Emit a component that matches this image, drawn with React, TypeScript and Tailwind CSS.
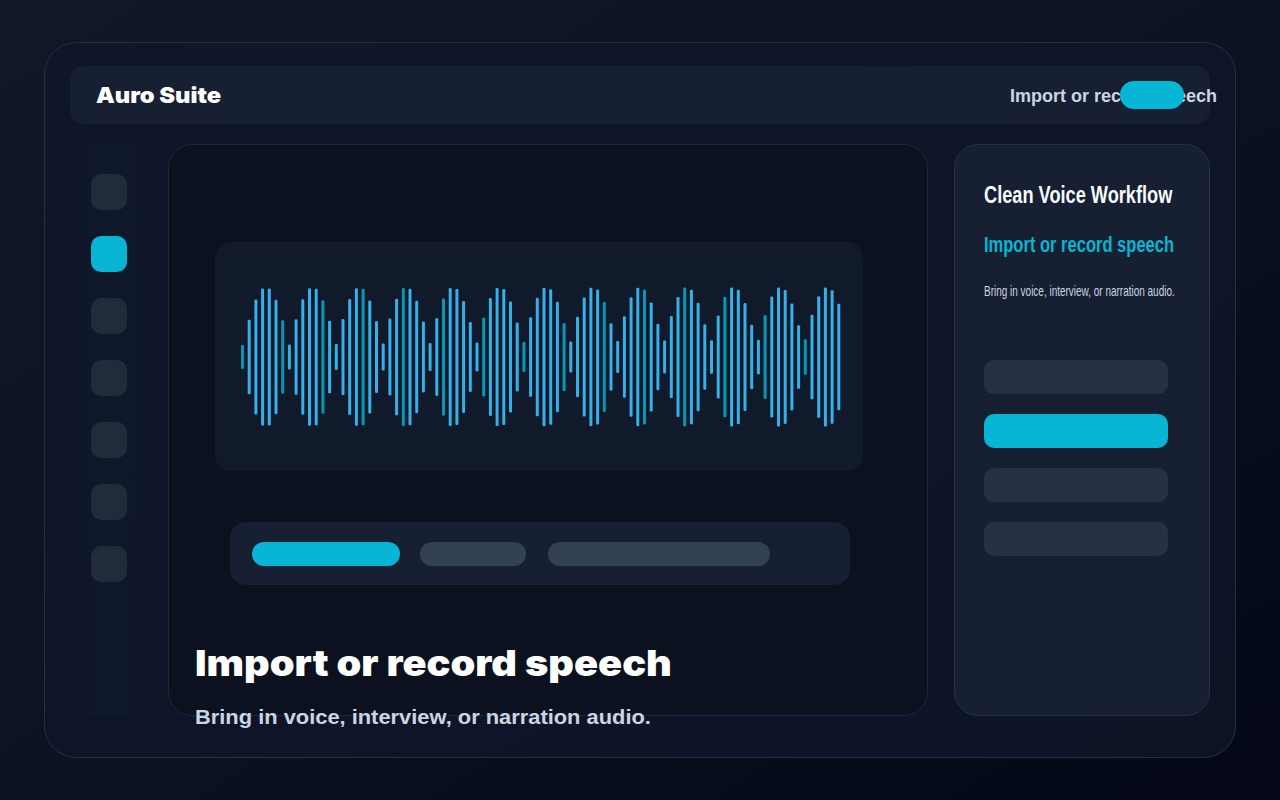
import React from 'react';

const sans = "font-['Liberation_Sans',Arial,sans-serif]";

// sine envelope for the waveform bars
const bars = Array.from({ length: 90 }, (_, i) => ({
  h: 24 + 116 * Math.abs(Math.sin(i * 0.45)),
  accent: i % 6 === 0,
}));

const Waveform = () => (
  <svg width="600" height="140" viewBox="0 0 600 140">
    {bars.map((b, i) => (
      <rect
        key={i}
        x={i * 6.7}
        y={70 - b.h / 2}
        width="3"
        height={b.h}
        rx="1.2"
        fill={b.accent ? '#06b6d4' : '#38bdf8'}
        fillOpacity={b.accent ? 0.8 : 0.92}
      />
    ))}
  </svg>
);

const navItems = [false, true, false, false, false, false, false];
const steps = [false, true, false, false];

export default function App() {
  return (
    <div className={`min-h-screen w-full bg-linear-to-br from-[#101827] via-[#0b1221] to-[#040816] px-[44px] pt-[42px] ${sans}`}>
      <div className="h-[716px] w-[1192px] rounded-[32px] border border-[#262f3f] bg-[#10172a]/80 px-[25px] pt-[23px]">
        {/* top bar */}
        <header className="flex h-[58px] items-center justify-between rounded-[14px] bg-[#172033] pl-[26px] pr-[26px]">
          <span className="origin-left scale-x-[1.077] font-['Inter',sans-serif] text-[22px] font-black text-white">Auro Suite</span>
          <div className="relative flex w-[174px] items-center pt-[2px]">
            <span className="whitespace-nowrap text-[18px] font-bold text-[#cbd5e1]">Import or record speech</span>
            <span className="absolute right-0 top-1/2 h-[28px] w-[64px] -translate-y-1/2 rounded-full bg-[#06b6d4]" />
          </div>
        </header>

        <div className="mt-[20px] flex h-[572px]">
          {/* icon rail */}
          <nav className="flex w-[78px] shrink-0 flex-col items-center gap-[26px] rounded-[18px] bg-linear-to-r from-transparent via-[#0f1a2d]/50 to-transparent pt-[30px]">
            {navItems.map((active, i) => (
              <div key={i} className={`h-[36px] w-[36px] shrink-0 rounded-[10px] ${active ? 'bg-[#06b6d4]' : 'bg-[#212b39]'}`} />
            ))}
          </nav>

          {/* editor */}
          <main className="ml-[20px] flex h-[572px] w-[760px] shrink-0 flex-col rounded-[24px] border border-[#1f2837] bg-[#0b111e] pl-[26px] pt-[97px]">
            <div className="ml-[20px] flex h-[229px] w-[648px] shrink-0 items-center rounded-[16px] bg-[#111a2b] pl-[26px]">
              <Waveform />
            </div>

            <div className="ml-[35px] mt-[51px] flex h-[63px] w-[620px] shrink-0 items-center rounded-[16px] bg-[#172033] pl-[22px]">
              <div className="h-[24px] w-[148px] rounded-full bg-[#06b6d4]" />
              <div className="ml-[20px] h-[24px] w-[106px] rounded-full bg-[#334155]" />
              <div className="ml-[22px] h-[24px] w-[222px] rounded-full bg-[#334155]" />
            </div>

            <h1 className="mt-[56px] shrink-0 origin-left scale-x-[1.104] whitespace-nowrap font-['Inter',sans-serif] text-[36px] font-black leading-[44px] text-white">
              Import or record speech
            </h1>
            <p className="mt-[20px] shrink-0 origin-left scale-x-[1.093] whitespace-nowrap text-[20px] font-bold leading-[24px] text-[#cbd5e1]">
              Bring in voice, interview, or narration audio.
            </p>
          </main>

          {/* workflow panel */}
          <aside className="ml-[26px] h-[572px] w-[256px] shrink-0 rounded-[24px] border border-[#263043] bg-[#172033] pl-[29px] pt-[34px]">
            <h2 className="origin-left scale-x-[0.758] whitespace-nowrap text-[24px] font-bold leading-[32px] text-[#f8fafc]">
              Clean Voice Workflow
            </h2>
            <p className="mt-[20px] origin-left scale-x-[0.751] whitespace-nowrap text-[22px] font-bold leading-[28px] text-[#06b6d4]">
              Import or record speech
            </p>
            <p className="mt-[22px] origin-left scale-x-[0.665] whitespace-nowrap text-[15px] leading-[20px] text-[#cbd5e1]">
              Bring in voice, interview, or narration audio.
            </p>
            <div className="mt-[59px] flex flex-col gap-[20px]">
              {steps.map((active, i) => (
                <div key={i} className={`h-[34px] w-[184px] rounded-[10px] ${active ? 'bg-[#06b6d4]' : 'bg-[#263244]'}`} />
              ))}
            </div>
          </aside>
        </div>
      </div>
    </div>
  );
}
